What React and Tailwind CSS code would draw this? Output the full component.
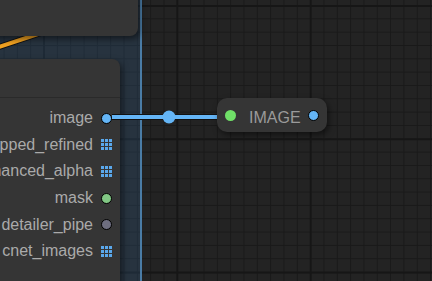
import React from "react";

const font = { fontFamily: '"Liberation Sans", Arial, sans-serif' };

const outputs = [
  { name: "image", kind: "dot", color: "bg-[#64b5f6]" },
  { name: "cropped_refined", kind: "list" },
  { name: "enhanced_alpha", kind: "list" },
  { name: "mask", kind: "dot", color: "bg-[#81c784]" },
  { name: "detailer_pipe", kind: "dot", color: "bg-[#6e6e80]" },
  { name: "cnet_images", kind: "list" },
];

const ListSlot = () => (
  <div className="grid grid-cols-3 gap-[1px] w-[11px] h-[11px] shrink-0">
    {Array.from({ length: 9 }).map((_, i) => (
      <div key={i} className="bg-[#5aa8ec]" />
    ))}
  </div>
);

const Slot = ({ output }) =>
  output.kind === "list" ? (
    <ListSlot />
  ) : (
    <div className={`w-[11px] h-[11px] shrink-0 rounded-full border border-black ${output.color}`} />
  );

const App = () => {
  return (
    <div
      className="relative w-[432px] h-[281px] overflow-hidden bg-[#232323] bg-[linear-gradient(to_right,#161616_2px,transparent_2px),linear-gradient(to_bottom,#161616_2px,transparent_2px),linear-gradient(to_right,#191919_1px,transparent_1px),linear-gradient(to_bottom,#191919_1px,transparent_1px)] bg-[size:133.33px_133.33px,133.33px_133.33px,13.333px_13.333px,13.333px_13.333px] bg-[position:43px_5px,43px_5px,3.6px_5px,3.6px_5px]"
      style={font}
    >
      {/* group */}
      <div className="absolute left-0 top-0 w-[142px] h-full bg-[rgba(50,90,130,0.3)] border-r-2 border-[#4a7ca6]" />

      {/* orange link under the top node */}
      <svg className="absolute left-0 top-0" width="432" height="281">
        <path d="M -4 48 L 44 32" stroke="#111" strokeWidth="6" fill="none" />
        <path d="M -4 48 L 44 32" stroke="#f0a222" strokeWidth="4" fill="none" />
      </svg>

      {/* top node */}
      <div className="absolute left-[-10px] top-[-20px] w-[148px] h-[56px] bg-[#353535] rounded-[8px] shadow-[2px_3px_6px_rgba(0,0,0,0.5)]" />

      {/* lower node */}
      <div className="absolute left-[-10px] top-[59px] w-[130px] h-[240px] bg-[#353535] rounded-[8px] shadow-[2px_3px_6px_rgba(0,0,0,0.5)] flex flex-col">
        <div className="h-[39px] border-b border-[#2a2a2a]" />
        <div className="flex flex-col pt-[7px]">
          {outputs.map((o) => (
            <div key={o.name} className="flex items-center justify-end h-[26.6px] pr-[8px] gap-[8px]">
              <span className="text-[16px] leading-none text-[#aaaaaa] whitespace-nowrap">{o.name}</span>
              <Slot output={o} />
            </div>
          ))}
        </div>
      </div>

      {/* link */}
      <svg className="absolute left-0 top-0" width="432" height="281">
        <line x1="112" y1="117" x2="220" y2="117" stroke="#111" strokeWidth="6" />
        <line x1="112" y1="117" x2="220" y2="117" stroke="#64b5f6" strokeWidth="4" />
        <circle cx="169" cy="117" r="6.5" fill="#64b5f6" />
      </svg>

      {/* IMAGE reroute node */}
      <div className="absolute left-[217px] top-[98px] w-[110px] h-[34px] bg-[#353535] rounded-[10px] shadow-[2px_3px_6px_rgba(0,0,0,0.5)] flex items-center">
        <div className="ml-[8px] w-[11px] h-[11px] shrink-0 rounded-full bg-[#70e068]" />
        <span className="ml-[13px] mt-[6px] text-[16px] leading-none text-[#9a9a9a]">IMAGE</span>
        <div className="ml-auto mr-[8px] w-[11px] h-[11px] shrink-0 rounded-full border border-black bg-[#64b5f6]" />
      </div>
    </div>
  );
};

export default App;
